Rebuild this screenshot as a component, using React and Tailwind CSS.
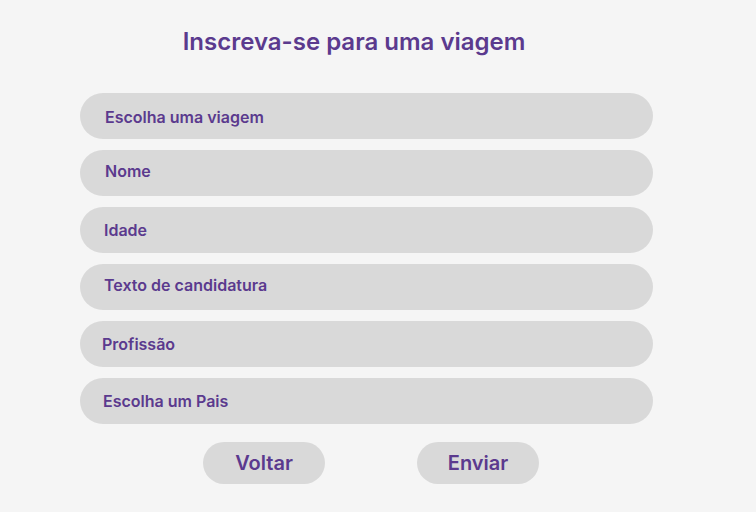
import React from 'react';

const fields = [
  { label: 'Escolha uma viagem', cls: 'pl-[25px] pt-[1px]' },
  { label: 'Nome', cls: 'pl-[25px] pb-[4px]' },
  { label: 'Idade', cls: 'pl-[24px]' },
  { label: 'Texto de candidatura', cls: 'pl-[24px] pb-[4px]' },
  { label: 'Profissão', cls: 'pl-[22px]' },
  { label: 'Escolha um Pais', cls: 'pl-[23px]' },
];

export default function App() {
  return (
    <div
      className="w-[756px] h-[512px] bg-[#f5f5f5] overflow-hidden"
      style={{ fontFamily: 'Inter, "Noto Sans", sans-serif' }}
    >
      <div className="ml-[80px] w-[573px] pt-[26px] flex flex-col">
        <h1 className="text-[24px] leading-[32px] font-semibold text-[#5b3a8e] text-center pr-[25px]">
          Inscreva-se para uma viagem
        </h1>

        {/* Form fields */}
        <div className="mt-[35px] flex flex-col gap-[11px]">
          {fields.map((f) => (
            <div
              key={f.label}
              className={`h-[46px] rounded-full bg-[#d9d9d9] flex items-center text-[16px] font-semibold text-[#5b3a8e] ${f.cls}`}
            >
              {f.label}
            </div>
          ))}
        </div>

        <div className="mt-[18px] ml-[123px] flex gap-[92px]">
          <button className="w-[122px] h-[42px] rounded-full bg-[#d9d9d9] text-[20px] font-semibold text-[#5b3a8e]">
            Voltar
          </button>
          <button className="w-[122px] h-[42px] rounded-full bg-[#d9d9d9] text-[20px] font-semibold text-[#5b3a8e]">
            Enviar
          </button>
        </div>
      </div>
    </div>
  );
}
